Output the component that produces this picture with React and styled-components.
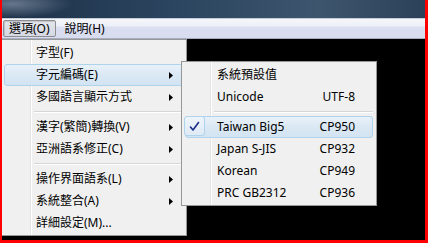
import styled, { createGlobalStyle } from "styled-components";

const GlobalStyle = createGlobalStyle`
  html, body {
    margin: 0;
    padding: 0;
    background: #000;
  }
  body {
    font-family: "Noto Sans", "Noto Sans CJK TC", sans-serif;
  }
`;

const mainItems = [
  { label: "字型(F)" },
  { label: "字元編碼(E)", sub: true, active: true },
  { label: "多國語言顯示方式", sub: true },
  { sep: true },
  { label: "漢字(繁簡)轉換(V)", sub: true },
  { label: "亞洲語系修正(C)", sub: true },
  { sep: true },
  { label: "操作界面語系(L)", sub: true },
  { label: "系統整合(A)", sub: true },
  { label: "詳細設定(M)..." },
];

const encodings = [
  { label: "系統預設值" },
  { label: "Unicode", code: "UTF-8" },
  { sep: true },
  { label: "Taiwan Big5", code: "CP950", checked: true },
  { label: "Japan S-JIS", code: "CP932" },
  { label: "Korean", code: "CP949" },
  { label: "PRC GB2312", code: "CP936" },
];

const Arrow = () => (
  <svg width="4" height="7" viewBox="0 0 4 7">
    <path d="M0 0 L4 3.5 L0 7 Z" fill="#000" />
  </svg>
);

const Check = () => (
  <svg width="11" height="11" viewBox="0 0 11 11">
    <path
      d="M1.5 6 L4 9 L9.5 1.5"
      fill="none"
      stroke="#1b2d8a"
      strokeWidth="1.6"
      strokeLinecap="round"
      strokeLinejoin="round"
    />
  </svg>
);

const App = () => {
  return (
    <>
      <GlobalStyle />
      <Frame>
        <TitleBar />
        <MenuBar>
          <BarItem $pressed>選項(O)</BarItem>
          <BarItem>說明(H)</BarItem>
        </MenuBar>
        <Content>
          <Menu>
            {mainItems.map((it, i) =>
              it.sep ? (
                <Separator key={i} />
              ) : (
                <Item key={i} $active={it.active}>
                  <Label>{it.label}</Label>
                  {it.sub && <Arrow />}
                </Item>
              )
            )}
          </Menu>
          <SubMenu>
            {encodings.map((it, i) =>
              it.sep ? (
                <Separator key={i} />
              ) : (
                <SubItem key={i} $active={it.checked}>
                  {it.checked && (
                    <CheckBox>
                      <Check />
                    </CheckBox>
                  )}
                  <Label>{it.label}</Label>
                  {it.code && <Code>{it.code}</Code>}
                </SubItem>
              )
            )}
          </SubMenu>
        </Content>
      </Frame>
    </>
  );
};

const Frame = styled.div`
  width: 428px;
  height: 243px;
  box-sizing: border-box;
  border-left: 2px solid #ff0000;
  border-right: 3px solid #ff0000;
  border-bottom: 3px solid #ff0000;
  display: flex;
  flex-direction: column;
  background: #000;
  overflow: hidden;
`;

const TitleBar = styled.div`
  height: 18px;
  flex: none;
  background:
    radial-gradient(ellipse 60px 14px at 10px 4px, rgba(150, 165, 185, 0.6), transparent),
    linear-gradient(90deg, #1e3249 0%, #2b445f 40%, #3d556d 75%, #2a4159 100%);
`;

const MenuBar = styled.div`
  height: 21px;
  flex: none;
  box-sizing: border-box;
  display: flex;
  align-items: center;
  gap: 0;
  padding: 0 1px 1px;
  border-top: 1px solid #c5ccd8;
  border-bottom: 1px solid #a8aec2;
  background: linear-gradient(
    to bottom,
    #f4f6fa 0%,
    #edf0f7 35%,
    #dadef0 45%,
    #d8dcef 100%
  );
`;

const BarItem = styled.div`
  height: 17px;
  box-sizing: border-box;
  padding: 0 5px 0 5px;
  display: flex;
  align-items: center;
  font-size: 12px;
  color: #000;
  border: 1px solid ${(p) => (p.$pressed ? "#8c8e93" : "transparent")};
  border-radius: 2px;
  background: ${(p) =>
    p.$pressed ? "linear-gradient(to bottom, #e4e6ec, #d6d9e3)" : "none"};
  box-shadow: ${(p) => (p.$pressed ? "inset 1px 1px 1px rgba(0,0,0,0.15)" : "none")};
  margin-right: 3px;
`;

const Content = styled.div`
  flex: 1;
  position: relative;
  background: #000;
`;

const Menu = styled.div`
  position: absolute;
  left: 0;
  top: 0;
  width: 185px;
  height: 197px;
  box-sizing: border-box;
  padding: 2px 2px;
  border: 1px solid #979797;
  border-left: none;
  background: linear-gradient(
      to right,
      transparent 28px,
      #e2e3e3 28px,
      #e2e3e3 29px,
      #ffffff 29px,
      #ffffff 30px,
      transparent 30px
    ),
    #f0f0f0;
  font-size: 12px;
  color: #000;
`;

const SubMenu = styled(Menu)`
  left: 179px;
  top: 22px;
  width: 196px;
  height: 145px;
  border-left: 1px solid #979797;
  padding: 2px 3px 2px 2px;
`;

const Item = styled.div`
  height: 22px;
  box-sizing: border-box;
  display: flex;
  align-items: center;
  padding: 0 10px 0 31px;
  border: 1px solid ${(p) => (p.$active ? "#aed3ec" : "transparent")};
  border-radius: 3px;
  background: ${(p) =>
    p.$active
      ? "linear-gradient(to bottom, #e9f1f9, #dae8f4 50%, #d2e3f2)"
      : "transparent"};
  position: relative;
`;

const SubItem = styled(Item)`
  padding: 0 17px 0 31px;
  margin-left: 1px;
`;

const Label = styled.span`
  flex: 1;
  white-space: nowrap;
  line-height: 1;
`;

const Code = styled.span`
  white-space: nowrap;
  line-height: 1;
`;

const CheckBox = styled.div`
  position: absolute;
  left: -2px;
  top: -1px;
  width: 21px;
  height: 20px;
  box-sizing: border-box;
  border: 1px solid #aed3ec;
  border-radius: 3px;
  background: linear-gradient(to bottom, #eef4fa, #dfeaf5);
  display: flex;
  align-items: center;
  justify-content: center;
`;

const Separator = styled.div`
  height: 8px;
  margin-left: 30px;
  display: flex;
  flex-direction: column;
  justify-content: center;
  &::before {
    content: "";
    height: 1px;
    background: #d7d7d7;
  }
  &::after {
    content: "";
    height: 1px;
    background: #ffffff;
  }
`;

export default App;
